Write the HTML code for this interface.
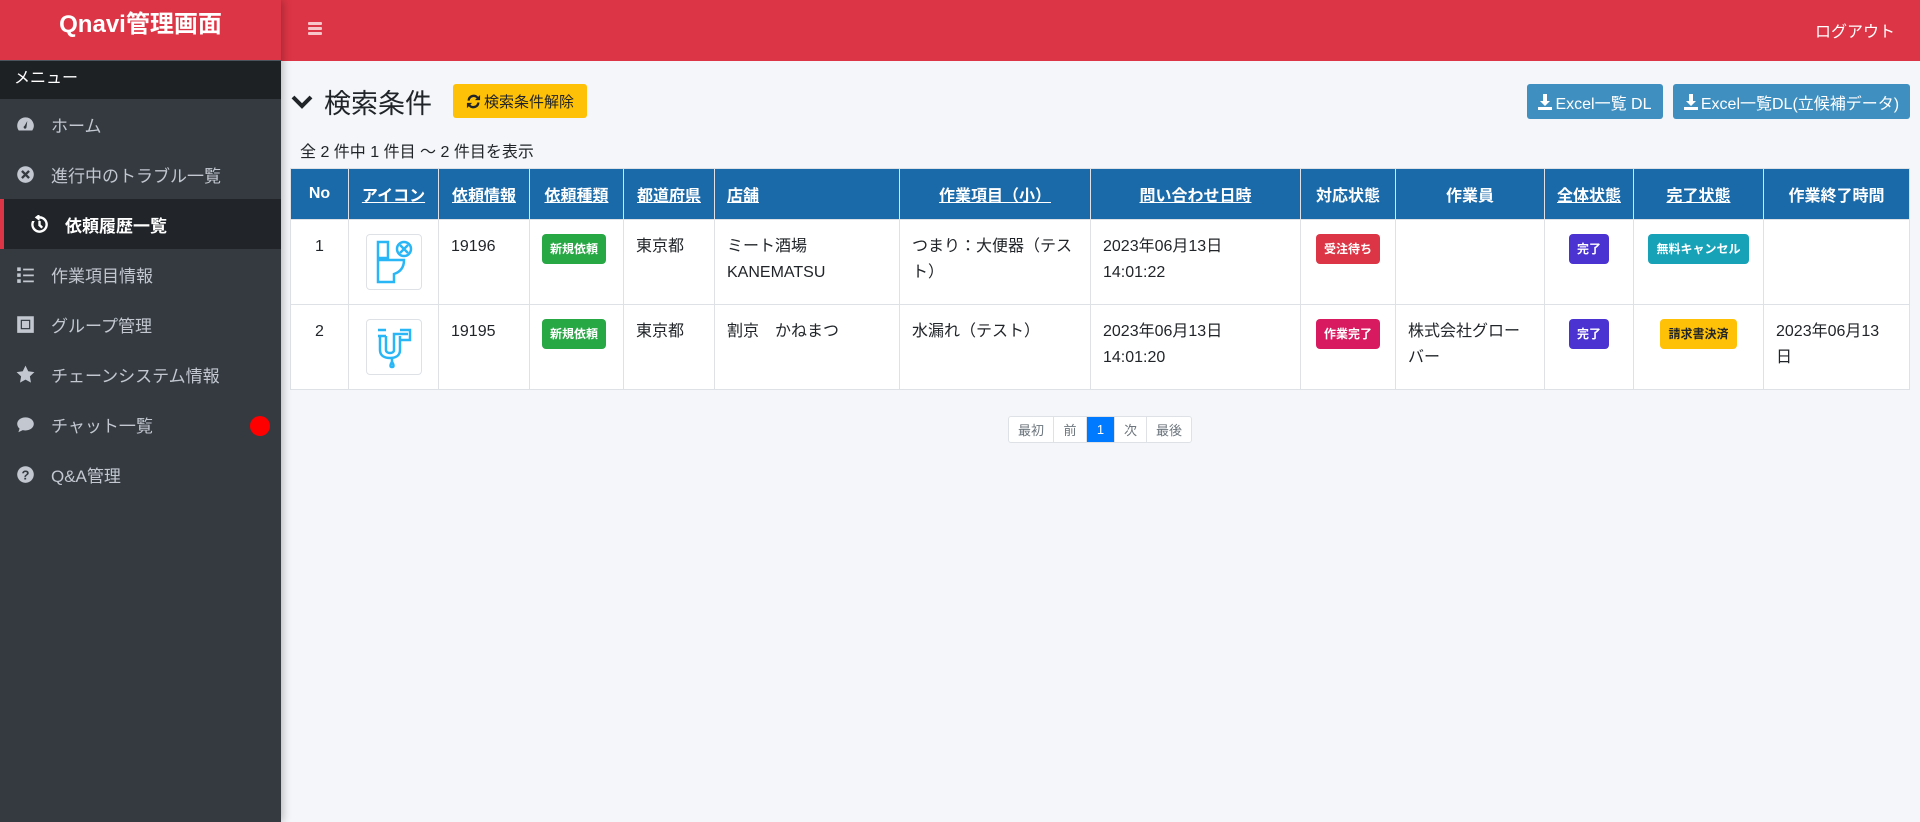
<!DOCTYPE html>
<html><head><meta charset="utf-8"><style>
*{box-sizing:border-box;margin:0;padding:0}
body{width:1920px;height:822px;overflow:hidden;background:#f4f6f9;font-family:"Liberation Sans","Noto Sans CJK JP",sans-serif;color:#212529;position:relative}
.side{position:absolute;left:0;top:0;width:281px;height:822px;background:#343a40;box-shadow:2px 0 8px rgba(0,0,0,.25);z-index:2}
.brand{height:61px;background:#dc3545;color:#fff;font-size:24px;font-weight:bold;text-align:center;line-height:50px;border-bottom:1px solid #4b545c}
.mh{height:38px;background:#1d2124;color:#fff;font-size:16px;line-height:36px;padding-left:14px}
.it{height:50px;color:#c2c7d0;font-size:17px;display:flex;align-items:center;padding-left:16px}
.it svg{width:19px;height:19px;margin-right:16px;fill:#c2c7d0}
.it.act{background:#212529;color:#fff;border-left:4px solid #dc3545;padding-left:26px;font-weight:bold}
.it.act svg{fill:#fff}
.top{position:absolute;left:281px;top:0;right:0;height:61px;background:#dc3545}
.ham{position:absolute;left:308px;top:22px;width:14px}
.ham i{display:block;height:3px;background:#f6c6cb;margin-bottom:2px;border-radius:1px}
.logout{position:absolute;right:25px;top:18px;color:#fff;font-size:16px}
.title{position:absolute;left:290px;top:82px;font-size:27px;display:flex;align-items:center}
.btnY{position:absolute;left:453px;top:84px;width:134px;height:34px;background:#ffc107;border-radius:3px;font-size:15px;display:flex;align-items:center;justify-content:center}
.btnB{position:absolute;top:84px;height:35px;background:#3f8fc0;border-radius:3px;color:#fff;font-size:16px;display:flex;align-items:center;justify-content:center}
.btnB svg{margin-right:3px}
.cnt{position:absolute;left:300px;top:138px;font-size:16px}
table{position:absolute;left:290px;top:168px;width:1620px;border-collapse:collapse;font-size:16px;table-layout:fixed}
th{background:#1a69a8;color:#fff;height:51px;border:1px solid #dee2e6;font-size:16px;font-weight:bold}
th u{text-decoration:underline}
td{background:#fff;border:1px solid #dee2e6;vertical-align:top;padding:14px 12px;height:85px;line-height:26px}
.b{display:inline-block;color:#fff;font-size:12px;font-weight:bold;padding:0 8px;height:30px;line-height:30px;border-radius:4px;margin-top:0}
.ic{width:56px;height:56px;border:1px solid #dee2e6;border-radius:4px;margin:0 auto;display:flex;align-items:center;justify-content:center}
.pg{position:absolute;left:1008px;top:416px;height:27px;display:flex;border:1px solid #dee2e6;border-radius:3px;background:#fff;font-size:13px;color:#6c757d}
.pg span{display:flex;align-items:center;justify-content:center;border-right:1px solid #dee2e6}
</style></head><body>
<div class="side">
<div class="brand">Qnavi管理画面</div>
<div class="mh">メニュー</div>
<div class="it"><svg viewBox="0 0 16 16"><path d="M8 2a7 7 0 0 0-7 7c0 1.5.5 2.9 1.3 4h11.4A7 7 0 0 0 8 2zm.8 8.5a1.2 1.2 0 1 1-1.6-1.3L9.5 5z"/></svg>ホーム</div>
<div class="it"><svg viewBox="0 0 16 16"><circle cx="8" cy="8" r="7"/><path d="M5 5l6 6M11 5l-6 6" stroke="#343a40" stroke-width="2"/></svg>進行中のトラブル一覧</div>
<div class="it act"><svg viewBox="0 0 16 16"><path d="M8 1a7 7 0 1 1-6.3 4h2.3A5 5 0 1 0 8 3v2L4 2l4-3z"/><path d="M7 5h2v3l2 2-1.4 1.4L7 9z"/></svg>依頼履歴一覧</div>
<div class="it"><svg viewBox="0 0 16 16"><path d="M1 2h3v3H1zM6 3h9v1.5H6zM1 7h3v3H1zM6 8h9v1.5H6zM1 12h3v3H1zM6 13h9v1.5H6z"/></svg>作業項目情報</div>
<div class="it"><svg viewBox="0 0 16 16"><path d="M1 1h14v14H1zm3 3v8h8V4z"/><path d="M5 5h6v6H5z"/></svg>グループ管理</div>
<div class="it"><svg viewBox="0 0 16 16"><path d="M8 0.5l2.3 4.8 5.2.7-3.8 3.6.9 5.2L8 12.3l-4.6 2.5.9-5.2L.5 6l5.2-.7z"/></svg>チェーンシステム情報</div>
<div class="it"><svg viewBox="0 0 16 16"><path d="M8 2c4 0 7 2.5 7 5.5S12 13 8 13c-.8 0-1.6-.1-2.3-.3L2 14.5l1-3C1.7 10.4 1 9 1 7.5 1 4.5 4 2 8 2z"/></svg>チャット一覧<span style="position:absolute;left:250px;width:20px;height:20px;border-radius:50%;background:#f00;margin-top:4px"></span></div>
<div class="it"><svg viewBox="0 0 16 16"><circle cx="8" cy="8" r="7"/><text x="8" y="12" font-size="11" font-weight="bold" text-anchor="middle" fill="#343a40" font-family="Liberation Sans">?</text></svg>Q&amp;A管理</div>
</div>
<div class="top"></div>
<div class="ham"><i></i><i></i><i></i></div>
<div class="logout">ログアウト</div>
<div class="title"><svg width="24" height="20" viewBox="0 0 24 20" style="margin-right:10px"><path d="M3 5l9 9 9-9" stroke="#212529" stroke-width="4" fill="none"/></svg>検索条件</div>
<div class="btnY"><svg width="15" height="15" viewBox="0 0 16 16" style="margin-right:3px"><path d="M13 3A6.5 6.5 0 0 0 1.6 7H4a4.3 4.3 0 0 1 7.4-2.4L9.5 6.5H15V1zM3 13a6.5 6.5 0 0 0 11.4-4H12a4.3 4.3 0 0 1-7.4 2.4L6.5 9.5H1V15z" fill="#212529"/></svg>検索条件解除</div>
<div class="btnB" style="left:1527px;width:136px"><svg width="14" height="16" viewBox="0 0 14 16" fill="#fff"><path d="M5 0h4v7h3L7 12 2 7h3zM0 13h14v3H0z"/></svg>Excel一覧 DL</div>
<div class="btnB" style="left:1673px;width:237px"><svg width="14" height="16" viewBox="0 0 14 16" fill="#fff"><path d="M5 0h4v7h3L7 12 2 7h3zM0 13h14v3H0z"/></svg>Excel一覧DL(立候補データ)</div>
<div class="cnt">全 2 件中 1 件目 ～ 2 件目を表示</div>
<table>
<tr><th style="width:58px">No</th><th style="width:90px"><u>アイコン</u></th><th style="width:91px"><u>依頼情報</u></th><th style="width:94px"><u>依頼種類</u></th><th style="width:91px"><u>都道府県</u></th><th style="width:185px;text-align:left;padding-left:12px"><u>店舗</u></th><th style="width:191px"><u>作業項目（小）</u></th><th style="width:210px"><u>問い合わせ日時</u></th><th style="width:95px">対応状態</th><th style="width:149px">作業員</th><th style="width:89px"><u>全体状態</u></th><th style="width:130px"><u>完了状態</u></th><th>作業終了時間</th></tr>
<tr><td style="text-align:center">1</td><td><div class="ic"><svg width="40" height="46" viewBox="0 0 40 46" fill="none" stroke="#29b6f6" stroke-width="2.5"><path d="M4 3h10v16H4zM4 21h26c0 8-4 12-10 14v8H4z"/><circle cx="30" cy="10" r="7"/><path d="M26 6l8 8M34 6l-8 8"/></svg></div></td><td>19196</td><td><span class="b" style="background:#28a745">新規依頼</span></td><td>東京都</td><td>ミート酒場<br>KANEMATSU</td><td>つまり：大便器（テスト）</td><td>2023年06月13日<br>14:01:22</td><td style="text-align:center"><span class="b" style="background:#dc3545">受注待ち</span></td><td></td><td style="text-align:center"><span class="b" style="background:#4b33d2">完了</span></td><td style="text-align:center"><span class="b" style="background:#17a2b8">無料キャンセル</span></td><td></td></tr>
<tr><td style="text-align:center">2</td><td><div class="ic"><svg width="44" height="46" viewBox="0 0 44 46" fill="none" stroke="#29b6f6" stroke-width="2.5"><path d="M6 6h8M6 12h8M8 12v14c0 6 5 8 10 8s10-2 10-8V12M14 12v14c0 2 2 3 4 3s4-1 4-3V10h14M28 6h10v10H28M20 34v4"/><path d="M20 38c-2 3-2 5 0 5s2-2 0-5z"/></svg></div></td><td>19195</td><td><span class="b" style="background:#28a745">新規依頼</span></td><td>東京都</td><td>割京　かねまつ</td><td>水漏れ（テスト）</td><td>2023年06月13日<br>14:01:20</td><td style="text-align:center"><span class="b" style="background:#d81b60">作業完了</span></td><td>株式会社グローバー</td><td style="text-align:center"><span class="b" style="background:#4b33d2">完了</span></td><td style="text-align:center"><span class="b" style="background:#ffc107;color:#212529">請求書決済</span></td><td>2023年06月13<br>日</td></tr>
</table>
<div class="pg"><span style="width:45px">最初</span><span style="width:33px">前</span><span style="width:28px;background:#007bff;color:#fff">1</span><span style="width:32px">次</span><span style="width:44px;border:0">最後</span></div>
</body></html>
